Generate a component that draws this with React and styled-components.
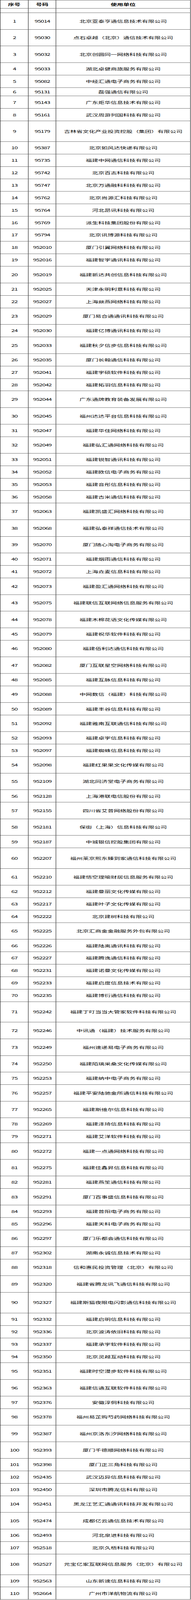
import React from "react";
import styled, { createGlobalStyle } from "styled-components";

const GlobalStyle = createGlobalStyle`
  html, body {
    margin: 0;
    padding: 0;
    background-color: #ffffff;
  }
`;

// full height of the sheet in the original screenshot
const PAGE_HEIGHT = 7428;

// row heights, measured from the reference grid lines
const HEIGHTS = { X: 39.5, S: 57.9, M: 77.15, L: 95.8 };

const ROWS = [
  ["1", "95014", "北京亚泰亨通信息技术有限公司", "M"],
  ["2", "95030", "点石卓越（北京）通信技术有限公司", "M"],
  ["3", "95032", "北京创圆同一网络科技有限公司", "M"],
  ["4", "95033", "湖北卓健商旅服务有限公司", "S"],
  ["5", "95082", "中经汇通电子商务有限公司", "S"],
  ["6", "95131", "磊强通信有限公司", "X"],
  ["7", "95143", "广东炬华信息技术有限公司", "S"],
  ["8", "95161", "武汉周游列国科技有限公司", "S"],
  ["9", "95179", "吉林省文化产业投资控股（集团）有限公司", "L"],
  ["10", "95387", "北京如风达快递有限公司", "S"],
  ["11", "95735", "福建中网通信科技有限公司", "S"],
  ["12", "95742", "北京百志科技有限公司", "S"],
  ["13", "95747", "北京万通融科科技有限公司", "S"],
  ["14", "95762", "北京尚源汇科技有限公司", "S"],
  ["15", "95764", "河北昂讯科技有限公司", "S"],
  ["16", "95769", "派生科技集团股份有限公司", "S"],
  ["17", "95794", "北京讯博源科技有限公司", "S"],
  ["18", "952010", "厦门引翼网络科技有限公司", "S"],
  ["19", "952016", "福建智宇通讯科技有限公司", "S"],
  ["20", "952019", "福建新达共创信息科技有限公司", "M"],
  ["21", "952025", "天津永明利意科技有限公司", "S"],
  ["22", "952027", "上海燚燕网络科技有限公司", "S"],
  ["23", "952029", "厦门易合通通讯科技有限公司", "M"],
  ["24", "952030", "福建亿博通讯科技有限公司", "S"],
  ["25", "952033", "福建秋夕信步信息科技有限公司", "M"],
  ["26", "952035", "厦门长翰通信科技有限公司", "S"],
  ["27", "952041", "福建宇硕软件科技有限公司", "S"],
  ["28", "952042", "福建拓羽信息科技有限公司", "S"],
  ["29", "952044", "广东通牌教育装备发展有限公司", "M"],
  ["30", "952045", "福州达达平台信息科技有限公司", "M"],
  ["31", "952047", "福建华住网络科技有限公司", "S"],
  ["32", "952049", "福建弘汇通网络科技有限公司", "M"],
  ["33", "952051", "福建锐智通讯科技有限公司", "S"],
  ["34", "952052", "福建欧信电子商务有限公司", "S"],
  ["35", "952053", "福建音彤信息科技有限公司", "S"],
  ["36", "952058", "福建古米通信科技有限公司", "S"],
  ["37", "952063", "福建凯盛汇网络科技有限公司", "M"],
  ["38", "952068", "福建弘泰祥通信技术有限公司", "M"],
  ["39", "952070", "厦门随心淘电子商务有限公司", "M"],
  ["40", "952071", "福建烟雨通信科技有限公司", "S"],
  ["41", "952072", "上海垚麦信息科技有限公司", "S"],
  ["42", "952073", "福建盈汇通网络科技有限公司", "M"],
  ["43", "952075", "福建联信互联网络信息服务有限公司", "M"],
  ["44", "952078", "福建木棉花语文化传媒有限公司", "M"],
  ["45", "952079", "福建祝华软件科技有限公司", "S"],
  ["46", "952080", "福建佰利达通信科技有限公司", "M"],
  ["47", "952082", "厦门互联星空网络科技有限公司", "M"],
  ["48", "952085", "福建互脉信息科技有限公司", "S"],
  ["49", "952088", "中网数信（福建）科技有限公司", "M"],
  ["50", "952089", "福建丰谷信息科技有限公司", "S"],
  ["51", "952092", "福建雅南互联通信科技有限公司", "M"],
  ["52", "952093", "福建卓宇信息科技有限公司", "S"],
  ["53", "952097", "福建蜘蛛信息科技有限公司", "S"],
  ["54", "952098", "福建红果果文化传媒有限公司", "M"],
  ["55", "952109", "湖北同济堂电子商务有限公司", "M"],
  ["56", "952128", "上海港联电信股份有限公司", "S"],
  ["57", "952155", "四川省艾普网络股份有限公司", "M"],
  ["58", "952181", "保街（上海）信息科技有限公司", "M"],
  ["59", "952187", "中城银信控股集团有限公司", "S"],
  ["60", "952207", "福州莱京熙东臻到家通信科技有限公司", "L"],
  ["61", "952210", "福建悟空理喻财居信息服务有限公司", "M"],
  ["62", "952212", "福建曼丽文化传媒有限公司", "S"],
  ["63", "952217", "福建叶子文化传媒有限公司", "S"],
  ["64", "952222", "北京建树科技有限公司", "S"],
  ["65", "952225", "北京汇商金金融服务外包有限公司", "M"],
  ["66", "952226", "福建陆离通讯科技有限公司", "S"],
  ["67", "952227", "福建腾逸通信科技有限公司", "S"],
  ["68", "952231", "福建诺曼文化传媒有限公司", "S"],
  ["69", "952233", "福建启度信息技术有限公司", "S"],
  ["70", "952235", "福建博衍通信科技有限公司", "S"],
  ["71", "952242", "福建丁叮当当大管家软件科技有限公司", "L"],
  ["72", "952246", "中讯通（福建）技术服务有限公司", "M"],
  ["73", "952249", "福州速递易电子商务有限公司", "M"],
  ["74", "952250", "福建陌璃采桑文化传媒有限公司", "M"],
  ["75", "952253", "福建纳中电子商务有限公司", "S"],
  ["76", "952257", "福建平安陆驰金所通信科技有限公司", "M"],
  ["77", "952265", "福建斯维尔信息科技有限公司", "M"],
  ["78", "952269", "福建泽琦信息科技有限公司", "S"],
  ["79", "952271", "福建艾洋软件科技有限公司", "S"],
  ["80", "952272", "福建一点通网络科技有限公司", "M"],
  ["81", "952275", "福建佳鑫昇信息科技有限公司", "M"],
  ["82", "952281", "福建燕笙通信科技有限公司", "S"],
  ["83", "952291", "厦门百事盛信息科技有限公司", "M"],
  ["84", "952293", "福建普阳电子商务有限公司", "S"],
  ["85", "952296", "福建天科电子商务有限公司", "S"],
  ["86", "952297", "厦门乐都会通信科技有限公司", "M"],
  ["87", "952302", "湖南永诚信息技术有限公司", "S"],
  ["88", "952318", "信和惠民投资管理（北京）有限公司", "M"],
  ["89", "952320", "福建省腾龙讯飞通信科技有限公司", "M"],
  ["90", "952327", "福建斯猫夜眼电闪影通信科技有限公司", "L"],
  ["91", "952332", "福建启明信息科技有限公司", "S"],
  ["92", "952336", "北京波涛依旧科技有限公司", "S"],
  ["93", "952337", "福建承宇软件科技有限公司", "S"],
  ["94", "952350", "北京灵越互动科技有限公司", "S"],
  ["95", "952351", "福建时空漫步软件科技有限公司", "M"],
  ["96", "952363", "福建信通互联软件科技有限公司", "M"],
  ["97", "952376", "安徽淳侗科技有限公司", "S"],
  ["98", "952378", "福州易芷购芍药网络科技有限公司", "M"],
  ["99", "952387", "福州京洛东汐网络科技有限公司", "M"],
  ["100", "952393", "厦门千德顺网络科技有限公司", "M"],
  ["101", "952398", "厦门正三角科技有限公司", "S"],
  ["102", "952435", "武汉迈异信息科技有限公司", "S"],
  ["103", "952450", "深圳市腾龙信科有限公司", "S"],
  ["104", "952451", "黑龙江艺汇通通讯科技开发有限公司", "M"],
  ["105", "952474", "成都亿云通信息技术有限公司", "M"],
  ["106", "952493", "河北泉进科技有限公司", "S"],
  ["107", "952518", "北京久梧科技有限公司", "S"],
  ["108", "952527", "元宝亿家互联网信息服务（北京）有限公司", "L"],
  ["109", "952563", "山东新速信息科技有限公司", "S"],
  ["110", "952664", "广州市洋航物流有限公司", "S"],
];

// clips the page to the (possibly shortened) window height
const Viewport = styled.div`
  width: 490px;
  overflow: hidden;
`;

// keeps the whole sheet inside the window when the window is shorter than the sheet
const Frame = styled.div`
  width: 490px;
  transform-origin: 0 0;
`;

const Sheet = styled.div`
  width: 489px;
  box-sizing: border-box;
  border-top: 1px solid #000;
  border-left: 1px solid #000;
  font-family: "Noto Sans CJK SC", "Noto Sans", sans-serif;
  font-size: 16px;
  color: #000;
`;

const Row = styled.div`
  display: grid;
  grid-template-columns: 72px 71px 1fr;
  height: ${(props) => props.$h}px;
  box-sizing: border-box;
  border-bottom: 1px solid #000;
`;

const Cell = styled.div`
  display: flex;
  align-items: center;
  justify-content: center;
  box-sizing: border-box;
  border-right: 1px solid #000;
  white-space: nowrap;
  line-height: 1;
  font-weight: ${(props) => (props.$head ? 700 : 400)};
`;

const NumCell = styled(Cell)`
  letter-spacing: -1px;
  padding-left: 1px;
`;

function useFitScale() {
  const read = () =>
    typeof window === "undefined"
      ? 1
      : Math.min(1, window.innerHeight / PAGE_HEIGHT);
  const [scale, setScale] = React.useState(read);

  React.useEffect(() => {
    const onResize = () => setScale(read());
    window.addEventListener("resize", onResize);
    return () => window.removeEventListener("resize", onResize);
  }, []);

  return scale;
}

export default function App() {
  const scale = useFitScale();

  return (
    <>
      <GlobalStyle />
      <Viewport style={{ height: Math.floor(PAGE_HEIGHT * scale) }}>
        <Frame style={{ transform: `scaleY(${scale})` }}>
          <Sheet>
            <Row $h={38}>
              <Cell $head>序号</Cell>
              <Cell $head>号码</Cell>
              <Cell $head>使用单位</Cell>
            </Row>
            <Row $h={20.5}>
              <Cell />
              <Cell />
              <Cell />
            </Row>
            {ROWS.map(([no, code, name, size]) => (
              <Row key={no} $h={HEIGHTS[size]}>
                <NumCell>{no}</NumCell>
                <NumCell>{code}</NumCell>
                <Cell>{name}</Cell>
              </Row>
            ))}
          </Sheet>
        </Frame>
      </Viewport>
    </>
  );
}
